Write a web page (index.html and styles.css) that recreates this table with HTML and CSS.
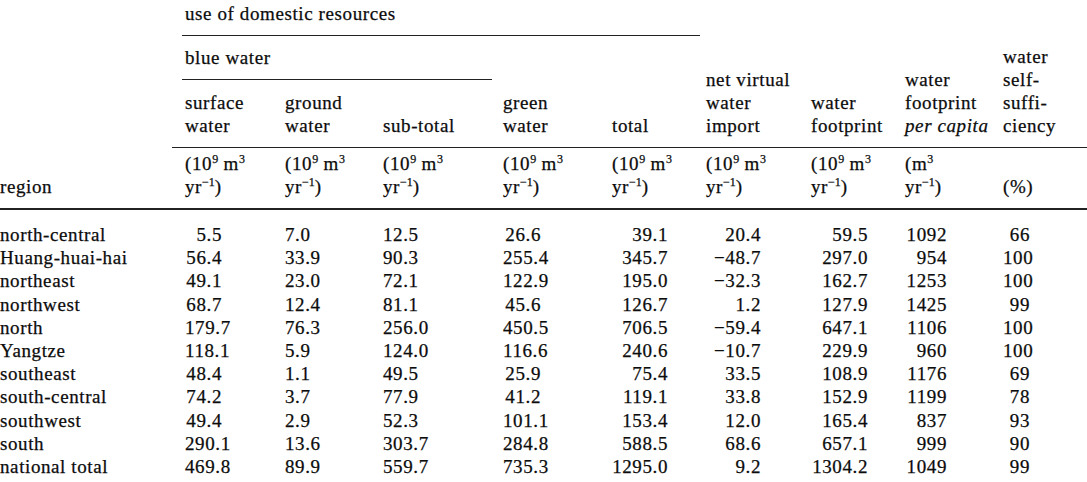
FILE: index.html
```html
<!DOCTYPE html>
<html lang="en">
<head>
<meta charset="utf-8">
<title>Water footprint by region</title>
<link rel="stylesheet" href="styles.css">
</head>
<body class="page">
<div class="wf-table">
  <div class="h-region">region</div>
  <div class="h-span h-domestic">use of domestic resources</div>
  <div class="h-span h-blue">blue water</div>

  <div class="h c2">surface<br>water</div>
  <div class="h c3">ground<br>water</div>
  <div class="h c4">sub-total</div>
  <div class="h c5">green<br>water</div>
  <div class="h c6">total</div>
  <div class="h tall c7">net virtual<br>water<br>import</div>
  <div class="h tall c8">water<br>footprint</div>
  <div class="h tall c9">water<br>footprint<br><i class="it">per capita</i></div>
  <div class="h tall c10">water<br>self-<br>suffi-<br>ciency</div>

  <div class="u c2 first">(10<sup class="sp">9</sup> m<sup class="sp">3</sup><br>yr<sup class="sp">−1</sup>)</div>
  <div class="u c3">(10<sup class="sp">9</sup> m<sup class="sp">3</sup><br>yr<sup class="sp">−1</sup>)</div>
  <div class="u c4">(10<sup class="sp">9</sup> m<sup class="sp">3</sup><br>yr<sup class="sp">−1</sup>)</div>
  <div class="u c5">(10<sup class="sp">9</sup> m<sup class="sp">3</sup><br>yr<sup class="sp">−1</sup>)</div>
  <div class="u c6">(10<sup class="sp">9</sup> m<sup class="sp">3</sup><br>yr<sup class="sp">−1</sup>)</div>
  <div class="u c7">(10<sup class="sp">9</sup> m<sup class="sp">3</sup><br>yr<sup class="sp">−1</sup>)</div>
  <div class="u c8">(10<sup class="sp">9</sup> m<sup class="sp">3</sup><br>yr<sup class="sp">−1</sup>)</div>
  <div class="u c9">(m<sup class="sp">3</sup><br>yr<sup class="sp">−1</sup>)</div>
  <div class="u c10"><br>(%)</div>

  <div class="rule-thick"></div>

  <div class="tbody">
    <div class="row"><span class="reg">north-central</span><span class="n n2">5.5</span><span class="n n3">7.0</span><span class="n n4">12.5</span><span class="n n5">26.6</span><span class="n n6">39.1</span><span class="n n7">20.4</span><span class="n n8">59.5</span><span class="n n9">1092</span><span class="n n10">66</span></div>
    <div class="row"><span class="reg">Huang-huai-hai</span><span class="n n2">56.4</span><span class="n n3">33.9</span><span class="n n4">90.3</span><span class="n n5">255.4</span><span class="n n6">345.7</span><span class="n n7">−48.7</span><span class="n n8">297.0</span><span class="n n9">954</span><span class="n n10">100</span></div>
    <div class="row"><span class="reg">northeast</span><span class="n n2">49.1</span><span class="n n3">23.0</span><span class="n n4">72.1</span><span class="n n5">122.9</span><span class="n n6">195.0</span><span class="n n7">−32.3</span><span class="n n8">162.7</span><span class="n n9">1253</span><span class="n n10">100</span></div>
    <div class="row"><span class="reg">northwest</span><span class="n n2">68.7</span><span class="n n3">12.4</span><span class="n n4">81.1</span><span class="n n5">45.6</span><span class="n n6">126.7</span><span class="n n7">1.2</span><span class="n n8">127.9</span><span class="n n9">1425</span><span class="n n10">99</span></div>
    <div class="row"><span class="reg">north</span><span class="n n2">179.7</span><span class="n n3">76.3</span><span class="n n4">256.0</span><span class="n n5">450.5</span><span class="n n6">706.5</span><span class="n n7">−59.4</span><span class="n n8">647.1</span><span class="n n9">1106</span><span class="n n10">100</span></div>
    <div class="row"><span class="reg">Yangtze</span><span class="n n2">118.1</span><span class="n n3">5.9</span><span class="n n4">124.0</span><span class="n n5">116.6</span><span class="n n6">240.6</span><span class="n n7">−10.7</span><span class="n n8">229.9</span><span class="n n9">960</span><span class="n n10">100</span></div>
    <div class="row"><span class="reg">southeast</span><span class="n n2">48.4</span><span class="n n3">1.1</span><span class="n n4">49.5</span><span class="n n5">25.9</span><span class="n n6">75.4</span><span class="n n7">33.5</span><span class="n n8">108.9</span><span class="n n9">1176</span><span class="n n10">69</span></div>
    <div class="row"><span class="reg">south-central</span><span class="n n2">74.2</span><span class="n n3">3.7</span><span class="n n4">77.9</span><span class="n n5">41.2</span><span class="n n6">119.1</span><span class="n n7">33.8</span><span class="n n8">152.9</span><span class="n n9">1199</span><span class="n n10">78</span></div>
    <div class="row"><span class="reg">southwest</span><span class="n n2">49.4</span><span class="n n3">2.9</span><span class="n n4">52.3</span><span class="n n5">101.1</span><span class="n n6">153.4</span><span class="n n7">12.0</span><span class="n n8">165.4</span><span class="n n9">837</span><span class="n n10">93</span></div>
    <div class="row"><span class="reg">south</span><span class="n n2">290.1</span><span class="n n3">13.6</span><span class="n n4">303.7</span><span class="n n5">284.8</span><span class="n n6">588.5</span><span class="n n7">68.6</span><span class="n n8">657.1</span><span class="n n9">999</span><span class="n n10">90</span></div>
    <div class="row"><span class="reg">national total</span><span class="n n2">469.8</span><span class="n n3">89.9</span><span class="n n4">559.7</span><span class="n n5">735.3</span><span class="n n6">1295.0</span><span class="n n7">9.2</span><span class="n n8">1304.2</span><span class="n n9">1049</span><span class="n n10">99</span></div>
  </div>
</div>
</body>
</html>
```

FILE: styles.css
```css
.page {
  margin: 0;
  padding: 0;
  width: 1087px;
  height: 482px;
  overflow: hidden;
  background: #ffffff;
}

.wf-table {
  display: grid;
  grid-template-columns: 185px 100px 98px 120px 109px 94px 105px 94px 98px 84px;
  line-height: 23px;
  color: #0c0c0c;
  font-family: "Liberation Serif", "Times New Roman", serif;
  font-size: 19px;
  letter-spacing: 0.6px;
  -webkit-text-stroke: 0.25px #0c0c0c;
}

.h-region {
  grid-column: 1;
  grid-row: 1 / 5;
  align-self: end;
  padding-bottom: 10px;
}

.h-span {
  border-bottom: 1px solid #222;
}

.h-domestic {
  grid-column: 2 / 7;
  grid-row: 1;
  margin-left: -3px;
  padding-left: 3px;
  margin-right: 6px;
  padding-top: 2px;
  padding-bottom: 10px;
}

.h-blue {
  grid-column: 2 / 5;
  grid-row: 2;
  margin-left: -3px;
  padding-left: 3px;
  margin-right: 11px;
  padding-top: 10px;
  padding-bottom: 10px;
}

.h {
  grid-row: 3;
  align-self: end;
  padding-top: 11px;
  padding-bottom: 10px;
}

.h.tall {
  grid-row: 1 / 4;
}

.it {
  font-style: italic;
}

.c2 { grid-column: 2; }
.c3 { grid-column: 3; }
.c4 { grid-column: 4; }
.c5 { grid-column: 5; }
.c6 { grid-column: 6; }
.c7 { grid-column: 7; }
.c8 { grid-column: 8; }
.c9 { grid-column: 9; }
.c10 { grid-column: 10; }

.u {
  grid-row: 4;
  border-top: 1px solid #222;
  padding-top: 4px;
  padding-bottom: 10px;
}

.u.first {
  margin-left: -13px;
  padding-left: 13px;
}

.sp {
  font-size: 12px;
  line-height: 0;
  vertical-align: 7px;
  letter-spacing: 0;
}

.rule-thick {
  grid-column: 1 / -1;
  grid-row: 5;
  border-top: 2px solid #222;
}

.tbody {
  grid-column: 1 / -1;
  grid-row: 6;
  padding-top: 13px;
}

.row {
  display: grid;
  grid-template-columns: 185px 100px 98px 120px 109px 94px 105px 94px 98px 84px;
  line-height: 23.2px;
  white-space: nowrap;
}

.reg {
  text-align: left;
}

.n {
  text-align: right;
}

.n2 { padding-right: 63px; }
.n3 { padding-right: 77px; }
.n4 { padding-right: 93px; }
.n5 { padding-right: 71px; }
.n6 { padding-right: 38px; }
.n7 { padding-right: 50px; }
.n8 { padding-right: 37px; }
.n9 { padding-right: 56px; }
.n10 { padding-right: 57px; }
```
